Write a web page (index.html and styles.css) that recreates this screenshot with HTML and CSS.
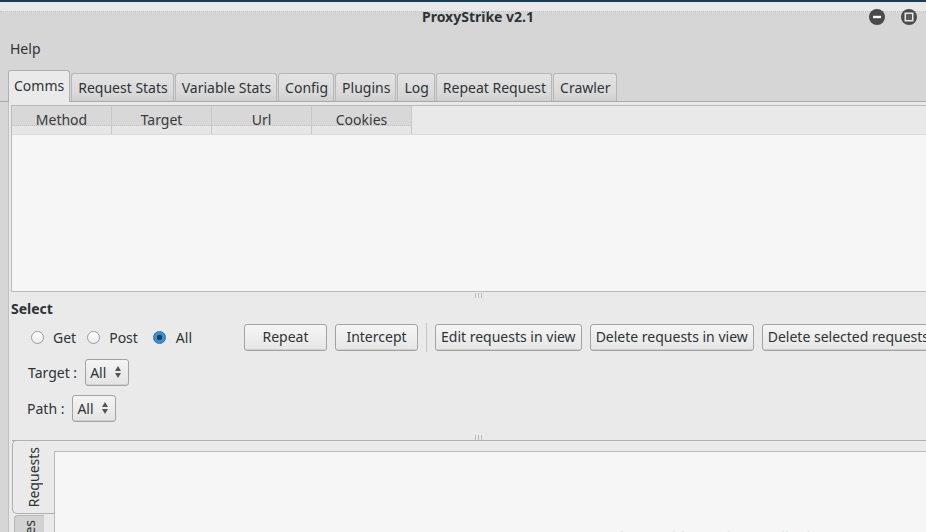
FILE: index.html
```html
<!DOCTYPE html>
<html>
<head>
<meta charset="utf-8">
<link rel="stylesheet" href="styles.css">
</head>
<body>
<div class="window">
  <div class="titlebar">
    <div class="title">ProxyStrike v2.1</div>
    <div class="wm-buttons">
      <span class="wm-btn"><svg width="16" height="16" viewBox="0 0 16 16"><circle cx="8" cy="8" r="8" fill="#4a4a4a"/><rect x="4" y="6.8" width="8" height="2.4" fill="#fff"/></svg></span>
      <span class="wm-btn"><svg width="16" height="16" viewBox="0 0 16 16"><circle cx="8" cy="8" r="8" fill="#4a4a4a"/><rect x="4.3" y="4.3" width="7.4" height="7.4" fill="none" stroke="#e8e8e8" stroke-width="1.6"/><rect x="6" y="6" width="4" height="4" fill="#5a5a5a"/></svg></span>
    </div>
  </div>
  <div class="menubar"><span class="menu-item">Help</span></div>
  <div class="tabbar">
    <div class="tab active">Comms</div>
    <div class="tab">Request Stats</div>
    <div class="tab">Variable Stats</div>
    <div class="tab">Config</div>
    <div class="tab">Plugins</div>
    <div class="tab">Log</div>
    <div class="tab">Repeat Request</div>
    <div class="tab">Crawler</div>
  </div>
  <div class="panel">
    <div class="table">
      <div class="thead">
        <div class="th"><span class="th-label">Method</span></div>
        <div class="th"><span class="th-label">Target</span></div>
        <div class="th"><span class="th-label">Url</span></div>
        <div class="th"><span class="th-label">Cookies</span></div>
      </div>
      <div class="tbody"></div>
    </div>
    <div class="splitter"><span class="grip"></span></div>
    <div class="select-section">
      <div class="section-title">Select</div>
      <div class="controls-row">
        <div class="radios">
          <label class="radio"><span class="radio-dot"></span>Get</label>
          <label class="radio"><span class="radio-dot"></span>Post</label>
          <label class="radio"><span class="radio-dot checked"></span>All</label>
        </div>
        <div class="buttons">
          <button class="btn btn-repeat">Repeat</button>
          <button class="btn btn-intercept">Intercept</button>
          <span class="vsep"></span>
          <button class="btn">Edit requests in view</button>
          <button class="btn">Delete requests in view</button>
          <button class="btn">Delete selected requests</button>
        </div>
      </div>
      <div class="field-row target-row">
        <span class="field-label">Target :</span>
        <span class="combo">All<span class="spin"><span class="up"></span><span class="down"></span></span></span>
      </div>
      <div class="field-row path-row">
        <span class="field-label">Path :</span>
        <span class="combo">All<span class="spin"><span class="up"></span><span class="down"></span></span></span>
      </div>
    </div>
    <div class="splitter splitter-bottom"><span class="grip"></span></div>
    <div class="bottom-tabs">
      <div class="vtabs">
        <div class="vtab active"><span class="vtext">Requests</span></div>
        <div class="vtab inactive"><span class="vtext">es</span></div>
      </div>
      <div class="vpanel">
        <div class="vcontent">
          <span class="watermark">https://blog.csdn.net/Eliauk</span>
        </div>
      </div>
    </div>
  </div>
</div>
</body>
</html>
```
FILE: styles.css
```css
* { box-sizing: border-box; }
html, body {
  margin: 0;
  padding: 0;
  width: 926px;
  height: 532px;
  overflow: hidden;
  background: #d6d6d6;
  font-family: "Noto Sans", "Open Sans", sans-serif;
  font-size: 14px;
  color: #2e3436;
}
.window {
  width: 926px;
  height: 532px;
  display: flex;
  flex-direction: column;
  overflow: hidden;
}
.window > *, .panel > *, .select-section > * { flex-shrink: 0; }
.titlebar {
  height: 33px;
  position: relative;
  border-top: 2px solid #163f58;
  background: linear-gradient(#e9e9e9 0, #e9e9e9 9px, #d6d6d6 10px);
  display: flex;
  align-items: center;
  justify-content: center;
}
.titlebar::before {
  content: "";
  position: absolute;
  left: 0; right: 0; top: 9px;
  border-top: 1px dotted #c4c4c4;
}
.title {
  font-weight: bold;
  font-size: 14px;
  color: #2e3436;
  margin-bottom: 3px;
  margin-left: 30px;
}
.wm-buttons {
  position: absolute;
  right: 9px;
  top: 7px;
  display: flex;
  gap: 16px;
}
.wm-btn { width: 16px; height: 16px; display: block; }
.wm-btn svg { display: block; }
.menubar {
  height: 29px;
  display: flex;
  align-items: center;
  padding-left: 10px;
  padding-top: 1px;
}
.menu-item { color: #2e3436; }
.tabbar {
  height: 40px;
  display: flex;
  align-items: flex-end;
  padding-left: 8px;
  border-bottom: 1px solid #a9a9a9;
}
.tab {
  height: 28px;
  padding: 0 5px 0 6px;
  margin-right: 1px;
  display: flex;
  align-items: center;
  border: 1px solid #b7b7b7;
  border-bottom: none;
  border-radius: 3px 3px 0 0;
  background: linear-gradient(#e3e3e3, #dadada 70%, #cfcfcf);
  color: #2e3436;
  line-height: 1;
  flex-shrink: 0;
}
.tab.active {
  height: 32px;
  margin-bottom: -1px;
  background: #eaeaea;
  border-color: #b0b0b0;
  padding: 0 5px 2px 5px;
}
.panel {
  flex: 1;
  background: #eaeaea;
  margin-left: 8px;
  border-left: 1px solid #c0c0c0;
  display: flex;
  flex-direction: column;
  padding-left: 2px;
  padding-top: 3px;
}
.table {
  height: 187px;
  border: 1px solid #b9b9b9;
  border-right: none;
  background: #f6f6f6;
  display: flex;
  flex-direction: column;
}
.thead {
  height: 29px;
  display: flex;
  background: #e9e9e9;
  border-bottom: 1px solid #dcdcdc;
  flex-shrink: 0;
}
.th {
  width: 100px;
  height: 28px;
  text-align: center;
  border-right: 1px solid #c8c8c8;
  background: linear-gradient(#d8d8d8 0, #d8d8d8 20px, #e6e6e6 20px);
  line-height: 18px;
  padding-top: 5px;
  color: #3a3a3a;
  position: relative;
}
.th::after {
  content: "";
  position: absolute;
  left: 0; right: 0; top: 19px;
  border-top: 1px dotted #c2c2c2;
}
.tbody { flex: 1; }
.splitter {
  height: 8px;
  border-top: 1px solid #b8b8b8;
  margin-top: -1px;
  display: flex;
  justify-content: center;
  padding-left: 20px;
}
.grip {
  width: 7px;
  height: 5px;
  margin-top: 1px;
  background: repeating-linear-gradient(90deg, #bcbcbc 0 1px, transparent 1px 3px);
}
.select-section {
  display: flex;
  flex-direction: column;
  height: 135px;
}
.section-title {
  font-weight: bold;
  height: 19px;
  line-height: 18px;
  margin-top: 1px;
}
.controls-row {
  display: flex;
  align-items: center;
  height: 30px;
  margin-top: 3px;
}
.radios {
  display: flex;
  align-items: center;
  padding-left: 20px;
  width: 233px;
  flex-shrink: 0;
}
.radio {
  display: flex;
  align-items: center;
  margin-right: 11px;
  gap: 9px;
}
.radio:nth-child(2) { margin-right: 15px; }
.radio:nth-child(3) { gap: 10px; }
.radio-dot {
  width: 13px;
  height: 13px;
  border-radius: 50%;
  border: 1px solid #9c9c9c;
  background: linear-gradient(#ffffff, #ececec);
  display: inline-block;
}
.radio-dot.checked {
  border: 1px solid #2a6fa8;
  background: radial-gradient(circle, #1d3c55 0 2.5px, #3a8fd4 3px);
}
.buttons {
  display: flex;
  align-items: center;
  gap: 8px;
  flex-shrink: 0;
}
.btn {
  height: 27px;
  font-family: inherit;
  font-size: 14px;
  color: #2e3436;
  padding: 0 5px 1px;
  border: 1px solid #a3a3a3;
  border-radius: 3px;
  background: linear-gradient(#f5f5f5, #e6e6e6);
  box-shadow: inset 0 -2px 0 -1px #d0d0d0;
  white-space: nowrap;
  flex-shrink: 0;
}
.btn-repeat { width: 83px; }
.btn-intercept { width: 83px; }
.vsep {
  width: 1px;
  height: 29px;
  background: #c4c4c4;
}
.field-row {
  display: flex;
  align-items: center;
  height: 28px;
  gap: 8px;
}
.target-row { margin-top: 6px; padding-left: 17px; }
.path-row { margin-top: 8px; padding-left: 16px; }
.combo {
  height: 27px;
  width: 44px;
  display: inline-flex;
  align-items: center;
  justify-content: space-between;
  border: 1px solid #a3a3a3;
  border-radius: 3px;
  background: linear-gradient(#f4f4f4, #e4e4e4);
  padding: 0 7px 0 4px;
  box-shadow: inset 0 -2px 0 -1px #d0d0d0;
}
.spin {
  display: flex;
  flex-direction: column;
  gap: 2px;
}
.up, .down {
  width: 0; height: 0;
  border-left: 3px solid transparent;
  border-right: 3px solid transparent;
}
.up { border-bottom: 5px solid #555; }
.down { border-top: 5px solid #555; }
.splitter-bottom {
  border-top: none;
  margin-top: 0;
  height: 6px;
}
.bottom-tabs {
  flex: 1;
  display: flex;
  border-top: 1px solid #b0b0b0;
  margin-left: 1px;
  position: relative;
}
.vtabs {
  width: 42px;
  display: flex;
  flex-direction: column;
  margin-top: -1px;
  flex-shrink: 0;
}
.vtab {
  display: flex;
  align-items: center;
  justify-content: center;
  flex-shrink: 0;
}
.vtab.active {
  height: 74px;
  width: 42px;
  background: #eaeaea;
  border: 1px solid #b0b0b0;
  border-right: none;
  border-radius: 5px 0 0 5px;
}
.vtab.inactive {
  height: 30px;
  width: 30px;
  margin-left: 2px;
  margin-top: 1px;
  background: #d2d2d2;
  border: 1px solid #b8b8b8;
  border-right: none;
  border-radius: 4px 0 0 0;
  align-items: flex-start;
  padding-top: 4px;
}
.vtext {
  writing-mode: vertical-rl;
  transform: rotate(180deg);
  white-space: nowrap;
}
.vpanel {
  flex: 1;
  padding-top: 10px;
}
.vcontent {
  height: 100%;
  border: 1px solid #b9b9b9;
  border-right: none;
  border-bottom: none;
  background: #f6f6f6;
  position: relative;
  overflow: hidden;
}
.watermark {
  position: absolute;
  left: 565px;
  top: 74px;
  color: #dedede;
  font-size: 15px;
  white-space: nowrap;
}
```
